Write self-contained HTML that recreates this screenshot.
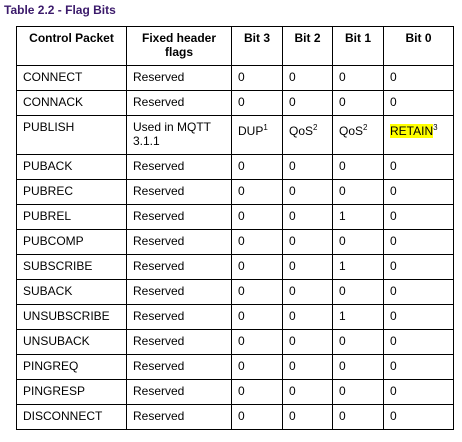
<!DOCTYPE html>
<html><head><style>
body{margin:0;width:462px;height:442px;background:#fff;font-family:"Liberation Sans",Arial,sans-serif;position:relative;overflow:hidden}
.t{position:absolute;left:4px;top:3px;font-weight:bold;font-size:12px;color:#3b1a6b}
table{position:absolute;left:16px;top:26px;border-collapse:collapse;font-size:12px;color:#000}
td{border:1px solid #000;padding:4px 6px 0 6px;vertical-align:top;height:20px;box-sizing:border-box;line-height:14px}
th{border:1px solid #000;padding:4px 4px 0;vertical-align:top;font-size:12px;height:39px;box-sizing:border-box;line-height:14px}
sup{font-size:8px;line-height:0;vertical-align:5px}
.y{background:#ffff00}
</style></head><body>
<div class="t">Table 2.2 - Flag Bits</div>
<table>
<colgroup><col style="width:110px"><col style="width:105px"><col style="width:51px"><col style="width:50px"><col style="width:51px"><col style="width:70px"></colgroup>
<tr><th>Control Packet</th><th>Fixed header flags</th><th>Bit 3</th><th>Bit 2</th><th>Bit 1</th><th>Bit 0</th></tr>
<tr style="height:25px"><td>CONNECT</td><td>Reserved</td><td>0</td><td>0</td><td>0</td><td>0</td></tr>
<tr style="height:25px"><td>CONNACK</td><td>Reserved</td><td>0</td><td>0</td><td>0</td><td>0</td></tr>
<tr style="height:39px"><td>PUBLISH</td><td>Used in MQTT 3.1.1</td><td style="padding-top:8px">DUP<sup>1</sup></td><td style="padding-top:8px">QoS<sup>2</sup></td><td style="padding-top:8px">QoS<sup>2</sup></td><td style="padding-top:8px"><span class="y">RETAIN</span><sup>3</sup></td></tr>
<tr style="height:25px"><td>PUBACK</td><td>Reserved</td><td>0</td><td>0</td><td>0</td><td>0</td></tr>
<tr style="height:25px"><td>PUBREC</td><td>Reserved</td><td>0</td><td>0</td><td>0</td><td>0</td></tr>
<tr style="height:25px"><td>PUBREL</td><td>Reserved</td><td>0</td><td>0</td><td>1</td><td>0</td></tr>
<tr style="height:25px"><td>PUBCOMP</td><td>Reserved</td><td>0</td><td>0</td><td>0</td><td>0</td></tr>
<tr style="height:25px"><td>SUBSCRIBE</td><td>Reserved</td><td>0</td><td>0</td><td>1</td><td>0</td></tr>
<tr style="height:25px"><td>SUBACK</td><td>Reserved</td><td>0</td><td>0</td><td>0</td><td>0</td></tr>
<tr style="height:25px"><td>UNSUBSCRIBE</td><td>Reserved</td><td>0</td><td>0</td><td>1</td><td>0</td></tr>
<tr style="height:25px"><td>UNSUBACK</td><td>Reserved</td><td>0</td><td>0</td><td>0</td><td>0</td></tr>
<tr style="height:25px"><td>PINGREQ</td><td>Reserved</td><td>0</td><td>0</td><td>0</td><td>0</td></tr>
<tr style="height:25px"><td>PINGRESP</td><td>Reserved</td><td>0</td><td>0</td><td>0</td><td>0</td></tr>
<tr style="height:25px"><td>DISCONNECT</td><td>Reserved</td><td>0</td><td>0</td><td>0</td><td>0</td></tr>
</table>
</body></html>
